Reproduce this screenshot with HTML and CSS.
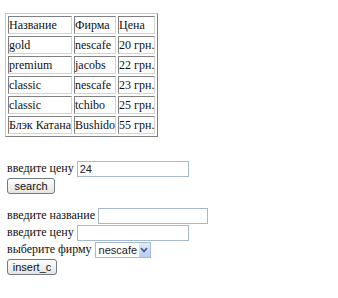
FILE: index.html
```html
<!DOCTYPE html>
<html>
<head>
<meta charset="utf-8">
<link rel="stylesheet" href="styles.css">
</head>
<body>
<div class="page">
  <table class="coffee">
    <tr><td>Название</td><td>Фирма</td><td>Цена</td></tr>
    <tr><td>gold</td><td>nescafe</td><td>20 грн.</td></tr>
    <tr><td>premium</td><td>jacobs</td><td>22 грн.</td></tr>
    <tr><td>classic</td><td>nescafe</td><td>23 грн.</td></tr>
    <tr><td>classic</td><td>tchibo</td><td>25 грн.</td></tr>
    <tr><td>Блэк Катана</td><td>Bushido</td><td>55 грн.</td></tr>
  </table>

  <form class="form search-form">
    <div class="line">введите цену <input class="field w-price" type="text" value="24"></div>
    <div class="line"><button class="btn btn-search" type="button">search</button></div>
  </form>

  <form class="form insert-form">
    <div class="line">введите название <input class="field w-name" type="text"></div>
    <div class="line">введите цену <input class="field w-price" type="text"></div>
    <div class="line">выберите фирму <span class="select"><span class="sel-text">nescafe</span><span class="sel-arrow"><svg width="8" height="6" viewBox="0 0 8 6"><path d="M1 1.2 L4 4.4 L7 1.2" fill="none" stroke="#4d6185" stroke-width="1.7"/></svg></span></span></div>
    <div class="line"><button class="btn btn-insert" type="button">insert_c</button></div>
  </form>
</div>
</body>
</html>
```

FILE: styles.css
```css
html, body {
  margin: 0;
  background: #fff;
}
.page {
  padding: 13px 5px 0 5px;
  font-family: "Liberation Serif", "Times New Roman", serif;
  font-size: 12px;
  color: #111;
}
.coffee {
  border: 1px solid;
  border-color: #c8c8c8 #808080 #808080 #c8c8c8;
  border-spacing: 2px;
  font-size: 12px;
}
.coffee td {
  border: 1px solid;
  border-color: #808080 #d4d4d4 #d4d4d4 #808080;
  padding: 1px 0;
  height: 14px;
  line-height: 14px;
  white-space: nowrap;
}
.form {
  margin: 0;
}
.search-form {
  margin-top: 23px;
}
.insert-form {
  margin-top: 13px;
}
.line {
  display: flex;
  align-items: center;
  gap: 3px;
  height: 17px;
  padding-left: 2px;
}
.field {
  box-sizing: border-box;
  height: 16px;
  border: 1px solid #a5b9d1;
  padding: 0 2px;
  font-family: "Liberation Sans", Arial, sans-serif;
  font-size: 11px;
  color: #222;
  outline: none;
}
.w-price { width: 112px; }
.w-name { width: 110px; }
.btn {
  box-sizing: border-box;
  height: 16px;
  padding: 0;
  border: 1px solid #6f7b88;
  border-radius: 3px;
  background: linear-gradient(#fdfdfd, #e4e4e0);
  font-family: "Liberation Sans", Arial, sans-serif;
  font-size: 11px;
  color: #111;
  line-height: 12px;
}
.btn-search { width: 48px; }
.btn-insert { width: 50px; }
.select {
  display: inline-flex;
  align-items: center;
  box-sizing: border-box;
  width: 56px;
  height: 16px;
  border: 1px solid #a5b9d1;
  font-family: "Liberation Sans", Arial, sans-serif;
  font-size: 11px;
  color: #222;
}
.sel-text {
  flex: 1;
  padding: 0 2px 0 3px;
}
.sel-arrow {
  display: flex;
  align-items: center;
  justify-content: center;
  width: 11px;
  height: 14px;
  background: linear-gradient(#e3eafc, #b9cbf3);
}
```
